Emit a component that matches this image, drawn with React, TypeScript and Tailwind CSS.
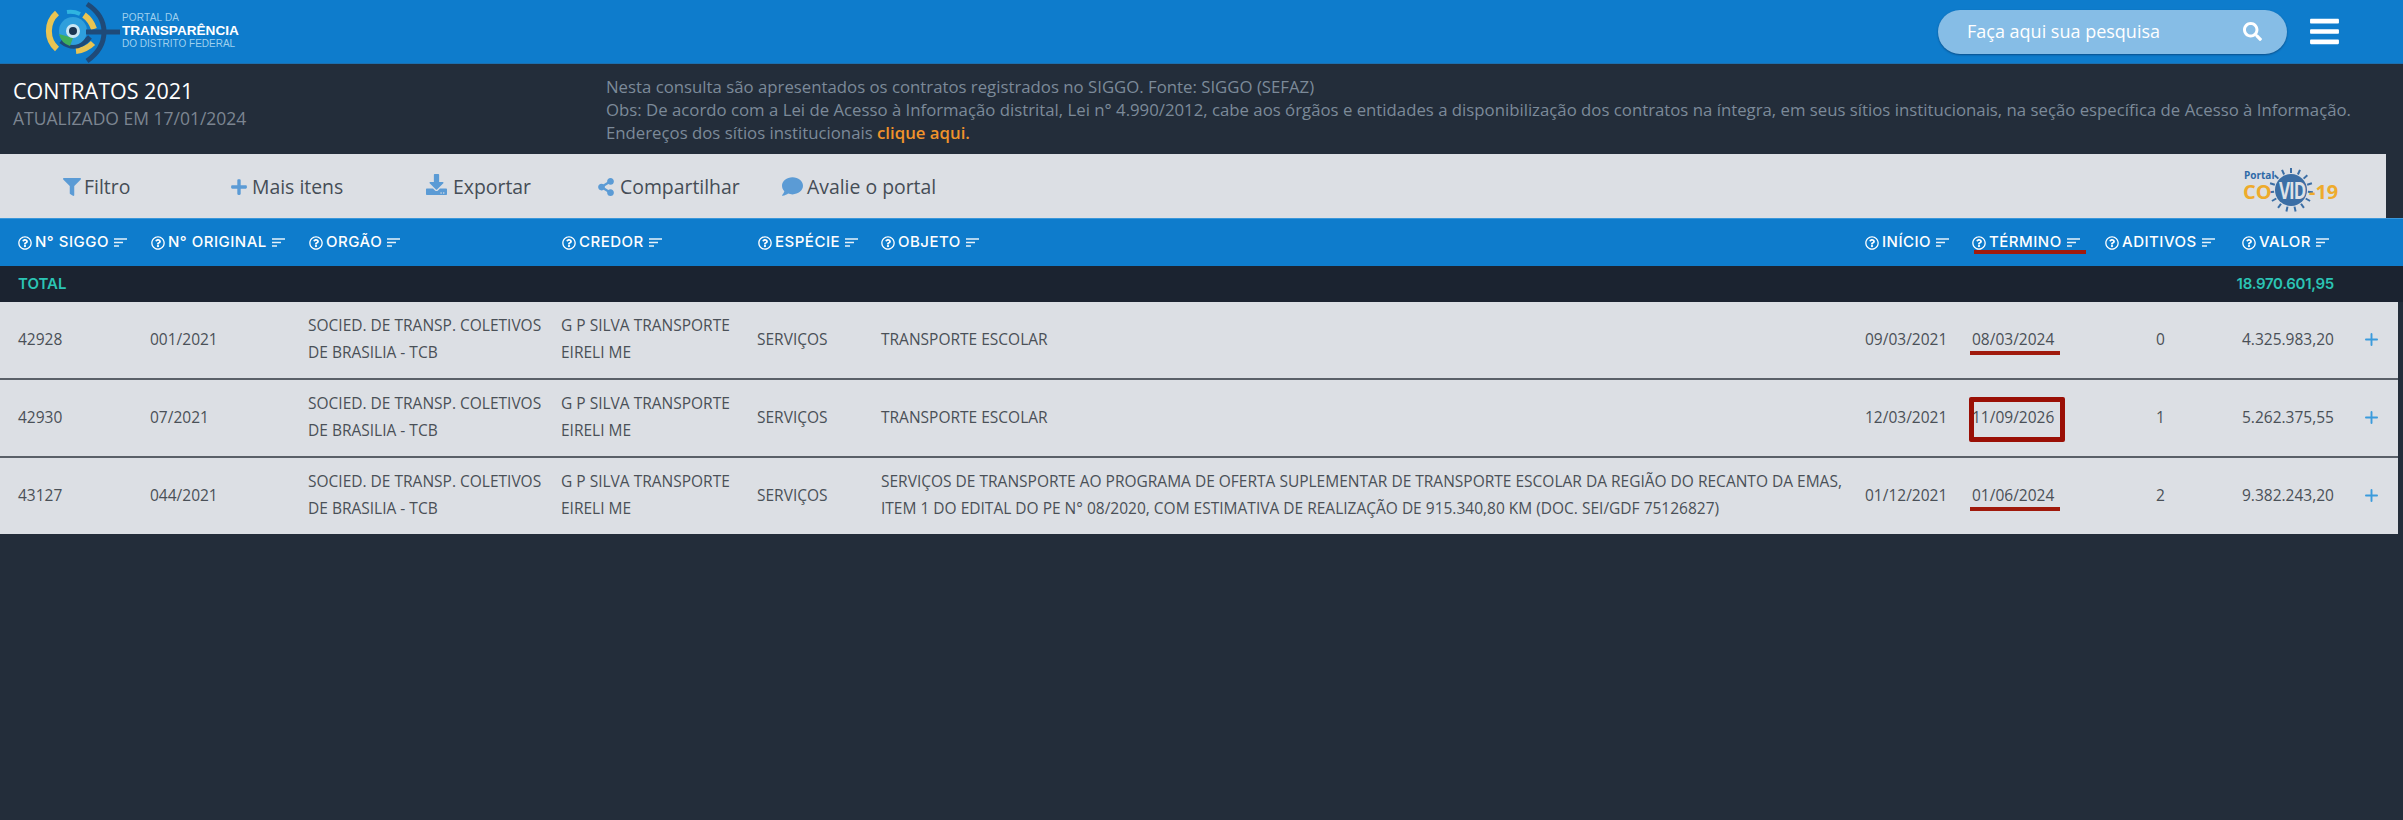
import { Plus } from "lucide-react";
import { FaFilter, FaPlus, FaDownload, FaShareAlt, FaComment, FaRegQuestionCircle, FaBars, FaSearch } from "react-icons/fa";

const gridCols = "grid grid-cols-[132px_158px_253px_196px_124px_984px_107px_133px_137px_128px_1fr]";

const headers = [
  "N° SIGGO",
  "N° ORIGINAL",
  "ORGÃO",
  "CREDOR",
  "ESPÉCIE",
  "OBJETO",
  "INÍCIO",
  "TÉRMINO",
  "ADITIVOS",
  "VALOR",
];

const rows = [
  {
    siggo: "42928",
    original: "001/2021",
    objeto: "TRANSPORTE ESCOLAR",
    inicio: "09/03/2021",
    termino: "08/03/2024",
    aditivos: "0",
    valor: "4.325.983,20",
    height: "h-[78px]",
  },
  {
    siggo: "42930",
    original: "07/2021",
    objeto: "TRANSPORTE ESCOLAR",
    inicio: "12/03/2021",
    termino: "11/09/2026",
    aditivos: "1",
    valor: "5.262.375,55",
    boxed: true,
    height: "h-[78px]",
  },
  {
    siggo: "43127",
    original: "044/2021",
    objeto:
      "SERVIÇOS DE TRANSPORTE AO PROGRAMA DE OFERTA SUPLEMENTAR DE TRANSPORTE ESCOLAR DA REGIÃO DO RECANTO DA EMAS, ITEM 1 DO EDITAL DO PE N° 08/2020, COM ESTIMATIVA DE REALIZAÇÃO DE 915.340,80 KM (DOC. SEI/GDF 75126827)",
    inicio: "01/12/2021",
    termino: "01/06/2024",
    aditivos: "2",
    valor: "9.382.243,20",
    height: "h-[76px]",
  },
];

const SortIcon = () => (
  <svg width="13" height="9" viewBox="0 0 13 9" className="ml-[5px] shrink-0 opacity-90">
    <path d="M0 1h13M0 4.5h9M0 8h5" stroke="currentColor" strokeWidth="1.7" fill="none" />
  </svg>
);

const Logo = () => (
  <svg width="64" height="62" viewBox="0 0 64 62" className="shrink-0 overflow-visible">
    <path d="M11 12 A24 24 0 0 0 11 48" stroke="#e9c452" strokeWidth="6" fill="none" />
    <path d="M30 50 Q40 49 47 42" stroke="#e9c452" strokeWidth="6" fill="none" />
    <path d="M38 14 Q45 19 48 28" stroke="#e9c452" strokeWidth="6" fill="none" />
    <path d="M41 3 Q58 14 58 31 Q58 48 41 60" stroke="#1f4a78" strokeWidth="5" fill="none" />
    <path d="M15 40 Q30 52 44 36" stroke="#1f4a78" strokeWidth="5" fill="none" />
    <path d="M21 11 Q28 10 34 13" stroke="#2fb4e0" strokeWidth="4" fill="none" />
    <circle cx="27" cy="30" r="14" fill="#2f9fdc" />
    <path d="M13 33 Q15 42 24 45 L27 37Z" fill="#3fae5b" />
    <circle cx="27" cy="30" r="7" fill="#c9e6f4" />
    <circle cx="27" cy="30" r="4" fill="#1b3552" />
    <path d="M40 31 H74" stroke="#1f4a78" strokeWidth="5" />
  </svg>
);

const spikes = [0, 24, 48, 72, 96, 120, 144, 168, 192, 216, 240, 264, 288, 312, 336];

const CovidLogo = () => (
  <div className="relative w-[98px] h-[50px]">
    <svg width="98" height="50" viewBox="0 0 98 50" className="absolute inset-0">
      {spikes.map((a) => (
        <g key={a} transform={`rotate(${a} 49 28)`}>
          <path d="M49 11V6" stroke="#3b6ea5" strokeWidth="2" />
        </g>
      ))}
      <circle cx="49" cy="28" r="16" fill="#3b6ea5" />
    </svg>
    <span className="absolute left-[2px] top-[8px] text-[10px] leading-none font-bold text-[#2f6aa8]">Portal</span>
    <span className="absolute left-[1px] top-[20px] text-[20px] leading-none font-bold text-[#eeab2c]">CO</span>
    <span className="absolute left-[37px] top-[19px] text-[17px] leading-none font-bold text-[#dde1e7] tracking-[-1px] scale-y-[1.4]">
      VID
    </span>
    <span className="absolute left-[67px] top-[20px] text-[20px] leading-none font-bold text-[#eeab2c] whitespace-nowrap">
      -19
    </span>
  </div>
);

const ToolbarItem = ({ icon, label, className }: { icon: React.ReactNode; label: string; className: string }) => (
  <div className={`flex items-center gap-[4px] text-[19.4px] text-[#454d56] ${className}`}>
    <span className="text-[#5b9bd5]">{icon}</span>
    {label}
  </div>
);

export default function App() {
  return (
    <div className="min-h-[820px] bg-[#232d3a] font-['Open_Sans',sans-serif] text-[15px]">
      {/* TOPO */}
      <div className="h-[63px] bg-[#0e7ccc] flex items-center justify-between pl-[46px] pr-[62px]">
        <div className="flex items-center">
          <Logo />
          <div className="ml-[12px] leading-none text-white font-['Liberation_Sans',sans-serif] -mt-[1px] z-10">
            <div className="text-[10px] text-[#9fd0ee] tracking-[0.2px]">PORTAL DA</div>
            <div className="text-[13.6px] font-bold mt-[1px]">TRANSPARÊNCIA</div>
            <div className="text-[10px] text-[#9fd0ee] mt-[1px]">DO DISTRITO FEDERAL</div>
          </div>
        </div>
        <div className="flex items-center">
          <div className="w-[349px] h-[44px] rounded-full bg-[#86bde6] shadow-[0_1px_2px_#0a4f8a] flex items-center justify-between pl-[29px] pr-[25px] text-white text-[18px]">
            <span>Faça aqui sua pesquisa</span>
            <FaSearch className="text-[19px] text-white" />
          </div>
          <FaBars className="ml-[21px] text-white text-[33px]" />
        </div>
      </div>

      {/* TITULO */}
      <div className="h-[91px] flex border-t border-[#1c6fae]">
        <div className="w-[606px] pl-[13px] pt-[13px]">
          <div className="text-[21.5px] leading-[28px] text-white">CONTRATOS 2021</div>
          <div className="text-[17.5px] leading-[26px] text-[#7c8591]">ATUALIZADO EM 17/01/2024</div>
        </div>
        <div className="pt-[11px] text-[#7c8a99] text-[16.78px] leading-[23px] whitespace-nowrap">
          <div>Nesta consulta são apresentados os contratos registrados no SIGGO. Fonte: SIGGO (SEFAZ)</div>
          <div>
            Obs: De acordo com a Lei de Acesso à Informação distrital, Lei n° 4.990/2012, cabe aos órgãos e entidades a
            disponibilização dos contratos na íntegra, em seus sítios institucionais, na seção específica de Acesso à
            Informação.
          </div>
          <div>
            Endereços dos sítios institucionais <span className="text-[#f0932b] font-semibold">clique aqui.</span>
          </div>
        </div>
      </div>

      {/* BARRA */}
      <div className="h-[64px] w-[2386px] bg-[#dcdfe4] flex items-center relative pt-[2px]">
        <ToolbarItem icon={<FaFilter className="text-[18px] -mr-[1px]" />} label="Filtro" className="ml-[63px] w-[167px]" />
        <ToolbarItem icon={<FaPlus className="text-[18px]" />} label="Mais itens" className="w-[196px]" />
        <ToolbarItem icon={<FaDownload className="text-[21px] -mt-[4px] mr-[2px]" />} label="Exportar" className="w-[171px]" />
        <ToolbarItem icon={<FaShareAlt className="text-[18px] mr-[1px]" />} label="Compartilhar" className="w-[185px]" />
        <ToolbarItem icon={<FaComment className="text-[21px]" />} label="Avalie o portal" className="" />
        <div className="ml-auto mr-[46px]">
          <CovidLogo />
        </div>
      </div>

      {/* CABECALHO */}
      <div className={`${gridCols} h-[48px] bg-[#0e7ccc] items-center pl-[18px] border-t border-[#3a97da] text-white text-[15px] font-['Inter',sans-serif] font-medium tracking-[0.5px]`}>
        {headers.map((h, i) => (
          <div key={h} className={`relative flex items-center whitespace-nowrap ${i > 0 && i < 5 ? "ml-[1px]" : ""}`}>
            <FaRegQuestionCircle className="mr-[3px] text-[14px] shrink-0" />
            {h}
            <SortIcon />
            {h === "TÉRMINO" && (
              <div className="absolute left-[2px] top-[19px] w-[112px] h-[4px] bg-[#a01a0c]" />
            )}
          </div>
        ))}
      </div>

      {/* TOTAL */}
      <div className="h-[36px] bg-[#1b2330] flex items-center justify-between pl-[18px] text-[#2bc4b4] text-[15px] font-['Inter',sans-serif] font-semibold">
        <span>TOTAL</span>
        <span className="mr-[69px] tracking-[-0.3px]">18.970.601,95</span>
      </div>

      {/* LINHAS */}
      <div className="w-[2398px] text-[#4a5057] text-[15.5px]">
        {rows.map((r, i) => (
          <div
            key={r.siggo}
            className={`${gridCols} ${r.height} items-center pl-[18px] pb-[2px] bg-[#dcdfe4] leading-[27px] ${i < 2 ? "border-b-2 border-[#5a6068]" : ""}`}
          >
            <div>{r.siggo}</div>
            <div>{r.original}</div>
            <div className="w-[245px]">SOCIED. DE TRANSP. COLETIVOS DE BRASILIA - TCB</div>
            <div className="w-[185px]">G P SILVA TRANSPORTE EIRELI ME</div>
            <div>SERVIÇOS</div>
            <div className="w-[975px]">{r.objeto}</div>
            <div>{r.inicio}</div>
            <div className="relative">
              {r.termino}
              {r.boxed ? (
                <div className="absolute -left-[3px] -top-[7px] w-[96px] h-[45px] border-[5px] border-[#9a0f05] rounded-[2px]" />
              ) : (
                <div className="absolute -left-[2px] top-[25px] w-[90px] h-[4px] bg-[#a01a0c]" />
              )}
            </div>
            <div className="pl-[51px]">{r.aditivos}</div>
            <div>{r.valor}</div>
            <Plus size={19} strokeWidth={2.4} className="text-[#3b9bdc] -ml-[8px]" />
          </div>
        ))}
      </div>
    </div>
  );
}
